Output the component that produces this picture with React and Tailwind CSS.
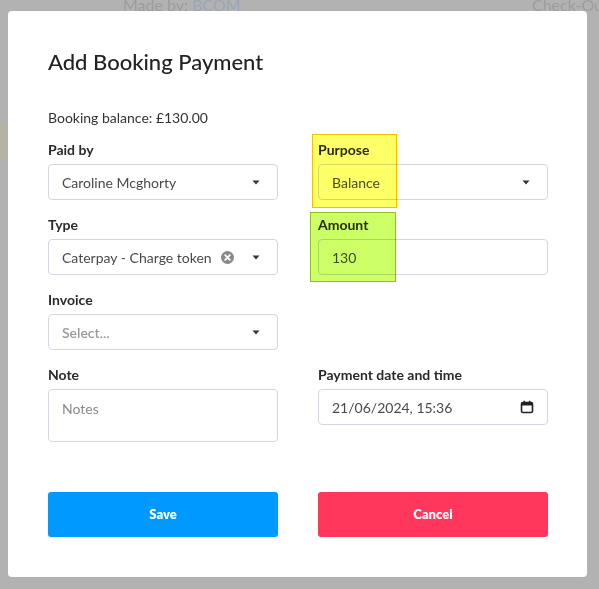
import React from "react";

const Caret = () => (
  <svg width="8" height="5" viewBox="0 0 8 5" className="shrink-0">
    <path d="M0.5 0.5 L7.5 0.5 L4 4.5 Z" fill="#333" />
  </svg>
);

const ClearIcon = () => (
  <svg width="13" height="13" viewBox="0 0 13 13" className="shrink-0">
    <circle cx="6.5" cy="6.5" r="6.5" fill="#8a8a8a" />
    <path d="M4.2 4.2 L8.8 8.8 M8.8 4.2 L4.2 8.8" stroke="#fff" strokeWidth="1.8" strokeLinecap="round" />
  </svg>
);

const CalIcon = () => (
  <svg width="14" height="14" viewBox="0 0 14 14" className="shrink-0">
    <rect x="1.5" y="2.5" width="11" height="10" rx="1.5" fill="none" stroke="#222" strokeWidth="1.6" />
    <rect x="1.5" y="2.5" width="11" height="3" fill="#222" />
    <rect x="3.5" y="0.8" width="1.6" height="2.5" fill="#222" />
    <rect x="8.9" y="0.8" width="1.6" height="2.5" fill="#222" />
  </svg>
);

const Label = ({ children }) => (
  <div className="h-5 mb-1 text-[14px] leading-5 font-bold text-[#2a2a2a]">{children}</div>
);

const Box = ({ children, className = "" }) => (
  <div className={"flex items-center border border-[#d5d7e0] rounded-[4px] bg-white pl-[13px] pr-[17px] text-[14px] text-[#4a4a4a] " + className}>
    {children}
  </div>
);

const Select = ({ value, placeholder, clearable }) => (
  <Box className="h-9">
    <span className={"flex-1 truncate " + (placeholder ? "text-[#999] font-semibold" : "")}>{value}</span>
    {clearable && <span className="mr-[18px] flex"><ClearIcon /></span>}
    <Caret />
  </Box>
);

export default function App() {
  return (
    <div
      className="relative w-[599px] h-[589px] bg-[#b2b2b2] overflow-hidden"
      style={{ fontFamily: "Lato, 'Noto Sans', sans-serif" }}
    >
      <div className="absolute top-[-7px] left-[123px] text-[16px] text-[#9c9c9c] whitespace-nowrap">
        Made by: <span className="text-[#98a6b6]">BCOM</span>
      </div>
      <div className="absolute top-[-7px] left-[532px] text-[16px] text-[#9c9c9c] whitespace-nowrap">Check-Out</div>
      <div className="absolute top-[123px] left-0 w-[8px] h-[37px] bg-[#b6b2a6]" />

      <div className="absolute left-[8px] top-[11px] w-[579px] h-[566px] bg-white rounded-[4px] pt-[37px] px-[40px]">
        <h2 className="text-[22px] leading-7 font-medium text-[#222]">Add Booking Payment</h2>
        <div className="mt-[32px] h-5 text-[14px] leading-5 text-[#333]">Booking balance: £130.00</div>

        <div className="mt-[12px] grid grid-cols-[230px_230px] gap-x-[40px]">
          <div className="mb-[15px]">
            <Label>Paid by</Label>
            <Select value="Caroline Mcghorty" />
          </div>
          <div className="mb-[15px]">
            <Label>Purpose</Label>
            <Select value="Balance" />
          </div>
          <div className="mb-[15px]">
            <Label>Type</Label>
            <Select value="Caterpay - Charge token" clearable />
          </div>
          <div className="mb-[15px]">
            <Label>Amount</Label>
            <Box className="h-9">130</Box>
          </div>
          <div className="mb-[15px]">
            <Label>Invoice</Label>
            <Select value="Select..." placeholder />
          </div>
          <div />
          <div>
            <Label>Note</Label>
            <Box className="h-[53px] items-start pt-[8px] text-[#8a8a8a]">Notes</Box>
          </div>
          <div>
            <Label>Payment date and time</Label>
            <Box className="h-9">
              <span className="flex-1">21/06/2024, 15:36</span>
              <span className="-mr-[4px] flex"><CalIcon /></span>
            </Box>
          </div>
        </div>

        <div className="mt-[50px] grid grid-cols-[230px_230px] gap-x-[40px]">
          <button className="h-[45px] rounded-[3px] bg-[#0099ff] text-white text-[13px] font-extrabold">Save</button>
          <button className="h-[45px] rounded-[3px] bg-[#ff375d] text-white text-[13px] font-extrabold">Cancel</button>
        </div>

        <div className="absolute left-[304px] top-[123px] w-[85px] h-[74px] border border-[#f2c200] bg-[#ffff66] mix-blend-multiply" />
        <div className="absolute left-[302px] top-[201px] w-[86px] h-[70px] border border-[#8fc21f] bg-[#ccff66] mix-blend-multiply" />
      </div>
    </div>
  );
}
